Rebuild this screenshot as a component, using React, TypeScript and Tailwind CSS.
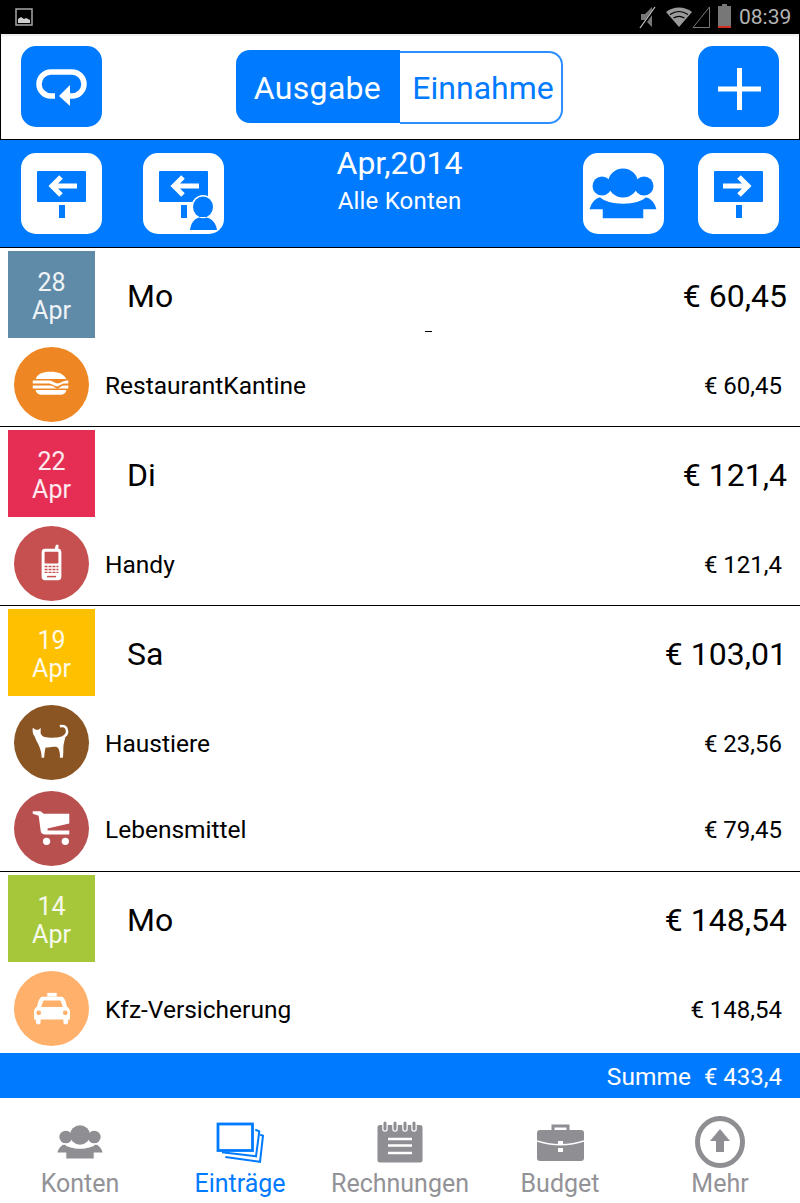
import React from "react";

const SignIcon = ({ dir = "left" }: { dir?: "left" | "right" }) => (
  <svg width="81" height="81" viewBox="0 0 81 81" fill="none">
    <rect x="16" y="18" width="49" height="31" rx="1" fill="#007aff" />
    <rect x="38" y="52" width="6" height="13" fill="#007aff" />
    {dir === "left" ? (
      <path d="M56 33H31M40 24l-9 9 9 9" stroke="#fff" strokeWidth="5" />
    ) : (
      <path d="M25 33H50M41 24l9 9-9 9" stroke="#fff" strokeWidth="5" />
    )}
  </svg>
);

const PersonSignIcon = () => (
  <svg width="81" height="81" viewBox="0 0 81 81" fill="none">
    <rect x="16" y="18" width="49" height="31" rx="1" fill="#007aff" />
    <rect x="38" y="52" width="6" height="13" fill="#007aff" />
    <path d="M56 33H31M40 24l-9 9 9 9" stroke="#fff" strokeWidth="5" />
    <ellipse cx="60" cy="54" rx="11.500" ry="12" fill="#fff" />
    <ellipse cx="60" cy="54" rx="10" ry="10.500" fill="#007aff" />
    <path d="M47 77c0-8 4-13 9-13h8c5 0 10 5 10 13z" fill="#fff" />
    <path d="M47 77c1-7 4-11 9-12.500 2.500 1 5.500 1 8 0 5 1.500 9 5.500 10 12.500z" fill="#007aff" />
  </svg>
);

const GroupIcon = ({ color, viewBox = "0 0 81 81" }: { color: string; viewBox?: string }) => (
  <svg width="100%" height="100%" viewBox={viewBox} preserveAspectRatio="none">
    <circle cx="19" cy="33" r="9.500" fill={color} />
    <circle cx="61" cy="33" r="9.500" fill={color} />
    <ellipse cx="40" cy="30" rx="15" ry="14.500" fill={color} />
    <path
      d="M5.500 57C7 50 12 44 17 43.500C22 48 30 50 40 50C50 50 58 48 63 43.500C68 44 73 50 74.500 57H61V66H19V57Z"
      fill={color}
      stroke="#fff"
      strokeWidth="1.500"
    />
  </svg>
);

const RepeatIcon = () => (
  <svg width="81" height="81" viewBox="0 0 81 81" fill="none">
    <path d="M34 50H30A12 12 0 0 1 30 26H51A12 12 0 0 1 51 50H46" stroke="#fff" strokeWidth="5.500" />
    <path d="M38 50L49 39V60z" fill="#fff" />
  </svg>
);

const PlusIcon = () => (
  <svg width="81" height="81" viewBox="0 0 81 81" fill="none">
    <path d="M41.500 22v42M20 43h43" stroke="#fff" strokeWidth="5" />
  </svg>
);

const Burger = () => (
  <svg width="75" height="75" viewBox="0 0 76 76" fill="#fff">
    <path d="M22 32.500C23 27.500 29 25 37 25S51 27.500 53 32.500Z" />
    <path d="M19 34H36C40 34.500 42 37 44 37C47 37 49 34.500 53 34H55V37H50C47 38 45 40 44 40C41 40 39 37.500 36 37H19Z" />
    <path d="M19 39H37C40 39 42 42 44 42C46 42 48 39 50 39H55V42H19Z" />
    <path d="M22 43.500H53C53 46 50 48.500 47 48.500H28C25 48.500 22 46 22 43.500Z" />
  </svg>
);

const Phone = () => (
  <svg width="75" height="75" viewBox="0 0 76 76">
    <path d="M41 24l1.500-5h2.500v5z" fill="#fff" />
    <rect x="28" y="23" width="20" height="32" rx="3.500" fill="#fff" />
    <rect x="31" y="26" width="14" height="12" rx="1" fill="#c65050" />
    <path d="M31 41h14M31 44h14M31 47h14" stroke="#c65050" strokeWidth="1.500" strokeDasharray="3 1" />
    <rect x="33.500" y="50.500" width="9" height="1.500" fill="#c65050" />
  </svg>
);

const Cat = () => (
  <svg width="75" height="75" viewBox="0 0 76 76" fill="#fff">
    <path d="M19 23L22 25H25L27 23L27 29C28 31 29 32 31 32.500C36 33.500 44 33.500 48 32L52 33C51 37 50 40 50 44C50 47 50 50 49.500 53.500H46.500C47 50 46 46 45 44C44 42 42 42 38 42.500C35 43 33 43 32 43C31 47 31 50 30.500 53.500H28C28 49 27 45 25 40.500C23 37 22 35 21 32C19 30 18.500 26 19 23Z" />
    <path d="M49 33C53 31 54.500 28 53.500 25C53 22 50 20.500 46.500 21.500" stroke="#fff" strokeWidth="2.500" fill="none" />
  </svg>
);

const Cart = () => (
  <svg width="75" height="75" viewBox="0 0 76 76" fill="#fff">
    <path d="M19 20.500H27L30 23H56V33L34 38V40H56V44H32C29 44 27 42.500 27 40L25 25L19 23Z" />
    <circle cx="33" cy="51" r="3.700" />
    <circle cx="52" cy="51" r="3.700" />
  </svg>
);

const Taxi = () => (
  <svg width="36" height="34" viewBox="0 0 38 34" fill="#fff">
    <rect x="14" y="0" width="10" height="4" />
    <path d="M9 4h20c2 0 3 2 4 4l2 7c2 1 3 3 3 5v8h-2v3c0 3-5 3-5 0v-3H7v3c0 3-5 3-5 0v-3H0v-8c0-2 1-4 3-5l2-7c1-2 2-4 4-4z" />
    <path d="M10 8h18l2.500 7h-23z" fill="#ffb06b" />
    <circle cx="5" cy="21" r="2.500" fill="#ffb06b" />
    <circle cx="33" cy="21" r="2.500" fill="#ffb06b" />
  </svg>
);

const days = [
  {
    day: "28",
    color: "bg-[#5f8aa8]",
    name: "Mo",
    total: "€ 60,45",
    items: [{ label: "RestaurantKantine", amount: "€ 60,45", color: "bg-[#ee8624]", icon: <Burger /> }],
  },
  {
    day: "22",
    color: "bg-[#e62e54]",
    name: "Di",
    total: "€ 121,4",
    items: [{ label: "Handy", amount: "€ 121,4", color: "bg-[#c65050]", icon: <Phone /> }],
  },
  {
    day: "19",
    color: "bg-[#ffc000]",
    name: "Sa",
    total: "€ 103,01",
    items: [
      { label: "Haustiere", amount: "€ 23,56", color: "bg-[#8a5523]", icon: <Cat /> },
      { label: "Lebensmittel", amount: "€ 79,45", color: "bg-[#b95050]", icon: <Cart /> },
    ],
  },
  {
    day: "14",
    color: "bg-[#a5c739]",
    name: "Mo",
    total: "€ 148,54",
    items: [{ label: "Kfz-Versicherung", amount: "€ 148,54", color: "bg-[#ffb06b]", icon: <Taxi /> }],
  },
];

const tabs = [
  {
    label: "Konten",
    icon: (
      <div className="w-[46px] h-[34px]">
        <GroupIcon color="#8e8e93" viewBox="6 15 68 51" />
      </div>
    ),
  },
  {
    label: "Einträge",
    active: true,
    icon: (
      <svg width="48" height="41" viewBox="0 0 48 41" fill="none">
        <path d="M39.300 7.700L43.300 9.300L40 34.300L6 30.300" stroke="#007aff" strokeWidth="2" />
        <path d="M44.300 12.700L47 13.700L44 39.800L9.300 35" stroke="#007aff" strokeWidth="2" />
        <rect x="2" y="2" width="34.500" height="26.500" stroke="#007aff" strokeWidth="2.800" />
      </svg>
    ),
  },
  {
    label: "Rechnungen",
    icon: (
      <svg width="46" height="42" viewBox="0 0 46 42" fill="none">
        <rect x="0.500" y="4" width="45" height="37.500" rx="2.500" fill="#8e8e93" />
        <path d="M8 2v6M18 2v6M28 2v6M37 2v6" stroke="#fff" strokeWidth="5.500" strokeLinecap="round" />
        <path d="M8 2v6M18 2v6M28 2v6M37 2v6" stroke="#8e8e93" strokeWidth="3" strokeLinecap="round" />
        <path d="M11 18h24M11 24.500h24M11 32h24" stroke="#fff" strokeWidth="2.500" />
      </svg>
    ),
  },
  {
    label: "Budget",
    icon: (
      <svg width="47" height="37" viewBox="0 0 47 37" fill="none">
        <path d="M16 7V2h15v5" stroke="#8e8e93" strokeWidth="3" />
        <rect x="0" y="6" width="47" height="31" rx="3" fill="#8e8e93" />
        <path d="M0 17c14 5 33 5 47 0" stroke="#fff" strokeWidth="1.500" />
        <rect x="21" y="17" width="5" height="4" fill="#fff" />
        <rect x="21" y="24" width="5" height="4" fill="#fff" />
      </svg>
    ),
  },
  {
    label: "Mehr",
    icon: (
      <svg width="50" height="52" viewBox="0 0 50 52" fill="none">
        <ellipse cx="25" cy="26" rx="22.500" ry="23.500" stroke="#8e8e93" strokeWidth="5" />
        <path d="M25 13l10 12h-6v11h-8V25h-6z" fill="#8e8e93" />
      </svg>
    ),
  },
];

export default function App() {
  return (
    <div className="w-[800px] h-[1203px] flex flex-col bg-white overflow-hidden font-['Roboto',sans-serif] text-black">
      {/* Status bar */}
      <div className="h-[34px] bg-black flex items-center justify-between pl-[15px] pr-2 shrink-0">
        <svg width="18" height="18" viewBox="0 0 18 18" fill="none">
          <rect x="1" y="1" width="16" height="16" stroke="#a8a8a8" strokeWidth="1.500" />
          <path d="M3 15v-4l3-2 3 2 2-1 4 2v3z" fill="#d0d0d0" />
        </svg>
        <div className="flex items-center">
          <svg width="20" height="24" viewBox="0 0 20 24" fill="none">
            <path d="M2 9h4l7-7v20l-7-7H2z" fill="#777" />
            <path d="M17 2L2 23" stroke="#000" strokeWidth="3" />
            <path d="M16 2L1 23" stroke="#ccc" strokeWidth="1.200" />
          </svg>
          <svg className="ml-[7px]" width="26" height="20" viewBox="0 0 26 20" fill="none">
            <path d="M0 5c7-6 19-6 26 0L13 20z" fill="#9a9a9a" />
            <path d="M4 7.500c6-4 12-4 18 0M7.500 11c4-2.500 7-2.500 11 0" stroke="#000" strokeWidth="1.200" />
          </svg>
          <svg width="18" height="22" viewBox="0 0 18 22" fill="none">
            <path d="M1 21.500L17.500 1v20.500z" stroke="#777" strokeWidth="1" />
          </svg>
          <div className="ml-2 w-[13px] h-[22px] bg-[#777] border-b-2 border-b-[#d03020] relative">
            <div className="absolute -top-[2px] left-[4px] w-[5px] h-[2px] bg-[#777]" />
          </div>
          <span className="ml-2 w-[53px] text-[21px] leading-none text-[#b4b4b4]">08:39</span>
        </div>
      </div>

      {/* Top toolbar */}
      <div className="h-[106px] shrink-0 border border-t-0 border-black shadow-[inset_0_2px_2px_#eeeeee] flex items-center justify-between px-5">
        <div className="w-[81px] h-[81px] rounded-[15px] bg-[#007aff]">
          <RepeatIcon />
        </div>
        <div className="flex h-[73px] w-[327px] mr-[2px] text-[32px]">
          <div className="w-[164px] rounded-l-[14px] bg-[#007aff] text-white flex items-center justify-center pt-[2px] tracking-[0.3px]">
            Ausgabe
          </div>
          <div className="flex-1 h-[73px] mt-px rounded-r-[14px] border-2 border-l-0 border-[#2d8fff] text-[#007aff] flex items-center justify-center pl-[6px] pt-[1px]">
            Einnahme
          </div>
        </div>
        <div className="w-[81px] h-[81px] rounded-[15px] bg-[#007aff]">
          <PlusIcon />
        </div>
      </div>

      {/* Month bar */}
      <div className="h-[108px] shrink-0 bg-[#007aff] border-b border-black flex items-center px-[21px] text-white">
        <div className="flex gap-[41px]">
          <div className="w-[81px] h-[81px] rounded-[15px] bg-white">
            <SignIcon />
          </div>
          <div className="w-[81px] h-[81px] rounded-[15px] bg-white">
            <PersonSignIcon />
          </div>
        </div>
        <div className="flex-1 self-start flex flex-col items-center pr-[8px] pt-px">
          <span className="text-[32px] leading-[44px]">Apr,2014</span>
          <span className="text-[24px] leading-[30px] mt-px tracking-[0.2px]">Alle Konten</span>
        </div>
        <div className="flex gap-[34px]">
          <div className="w-[81px] h-[81px] rounded-[15px] bg-white">
            <GroupIcon color="#007aff" />
          </div>
          <div className="w-[81px] h-[81px] rounded-[15px] bg-white">
            <SignIcon dir="right" />
          </div>
        </div>
      </div>

      {/* Day list */}
      <div className="flex-1 relative">
        <div className="absolute left-[425px] top-[83px] w-[7px] h-px bg-black" />
        {days.map((d, i) => (
          <div key={i} className={`pt-[3px] ${i < days.length - 1 ? "border-b border-black" : ""}`}>
            <div className="flex items-center h-[87px] pl-2 pr-[13px]">
              <div className={`w-[87px] h-[87px] ${d.color} text-white/90 flex flex-col items-center justify-center pt-[5px] text-[25px] leading-[28px]`}>
                <span>{d.day}</span>
                <span>Apr</span>
              </div>
              <span className="ml-[32px] pt-[2px] text-[32px]">{d.name}</span>
              <span className="ml-auto pt-[2px] text-[32px]">{d.total}</span>
            </div>
            <div className={`flex flex-col gap-[11px] mt-[9px] ${d.items.length > 1 ? "mb-[5px]" : "mb-[4px]"}`}>
              {d.items.map((item) => (
                <div key={item.label} className="flex items-center h-[75px] pl-[14px] pr-[18px]">
                  <div className={`w-[75px] h-[75px] rounded-full ${item.color} flex items-center justify-center`}>
                    {item.icon}
                  </div>
                  <span className="ml-[16px] pt-[4px] text-[24.5px]">{item.label}</span>
                  <span className="ml-auto pt-[2px] text-[24px]">{item.amount}</span>
                </div>
              ))}
            </div>
          </div>
        ))}
      </div>

      {/* Total */}
      <div className="h-[45px] shrink-0 bg-[#007aff] text-white text-[24px] flex items-center justify-end gap-[13px] pr-[18px] pt-[3px]">
        <span className="text-[24.5px]">Summe</span>
        <span>€ 433,4</span>
      </div>

      {/* Tab bar */}
      <div className="h-[105px] shrink-0 grid grid-cols-5 pt-[18px]">
        {tabs.map((t) => (
          <div key={t.label} className="flex flex-col items-center">
            <div className="h-[52px] flex items-center justify-center">{t.icon}</div>
            <span className={`text-[25px] leading-[28px] mt-[2px] ${t.active ? "text-[#007aff]" : "text-[#929297]"}`}>
              {t.label}
            </span>
          </div>
        ))}
      </div>
    </div>
  );
}
